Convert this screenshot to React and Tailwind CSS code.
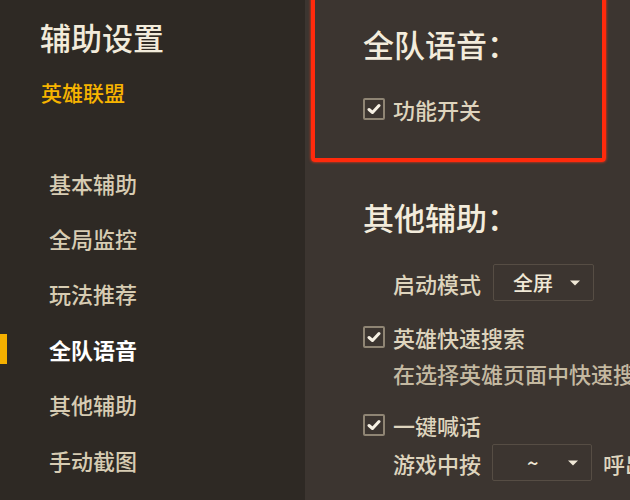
import React from "react";

const navItems = ["基本辅助", "全局监控", "玩法推荐", "全队语音", "其他辅助", "手动截图"];

const Checkbox = () => (
  <span className="flex h-[22px] w-[22px] shrink-0 items-center justify-center rounded-[2px] border-2 border-[#8f8574]">
    <svg width="14" height="12" viewBox="0 0 14 12">
      <path d="M2 6.5 L5.5 9.5 L12 2.5" fill="none" stroke="#f7f1e4" strokeWidth="3" strokeLinecap="round" strokeLinejoin="round" />
    </svg>
  </span>
);

const Select = ({ value, width, textPad }) => (
  <div className={`flex h-[37px] items-center justify-between rounded-[2px] border border-[#564d44] ${width}`}>
    <span className={`text-[20px] font-medium text-[#f0e8d6] ${textPad}`}>{value}</span>
    <svg width="12" height="8" viewBox="0 0 12 8" className="mr-[12px]">
      <path d="M1 1.5 H11 L6 6.5 Z" fill="#f0e8d6" />
    </svg>
  </div>
);

const CheckRow = ({ label }) => (
  <div className="flex h-[30px] items-center gap-[8px]">
    <Checkbox />
    <span className="text-[22px] font-medium leading-none text-[#ded4bd]">{label}</span>
  </div>
);

export default function App() {
  return (
    <main
      className="flex h-[500px] w-[630px] overflow-hidden whitespace-nowrap bg-[#3c3530]"
      style={{ fontFamily: '"Noto Sans CJK SC", "Noto Sans", sans-serif' }}
    >
      <aside className="flex w-[305px] shrink-0 flex-col bg-[#2e2924] pt-[19px]">
        <h1 className="pl-[40px] text-[31px] font-medium leading-[36px] text-[#f2ebdb]">辅助设置</h1>
        <div className="mt-[22px] pl-[41px] text-[21px] font-medium leading-[30px] text-[#f7b400]">英雄联盟</div>
        <nav className="mt-[48px] flex flex-col">
          {navItems.map((item) => {
            const active = item === "全队语音";
            return (
              <div key={item} className="flex h-[55.4px] items-center">
                <span className={`h-[30px] w-[7px] ${active ? "bg-[#f5b000]" : ""}`}></span>
                <span
                  className={`pl-[42px] text-[22px] leading-none ${
                    active ? "font-bold text-white" : "font-medium text-[#d7ccb3]"
                  }`}
                >
                  {item}
                </span>
              </div>
            );
          })}
        </nav>
      </aside>

      <section className="flex flex-1 flex-col">
        <div className="ml-[6px] mt-[-10px] w-[295px] rounded-[4px] border-4 border-[#ff2a0c] pb-[34px] pl-[48px] pt-[32px] shadow-[0_0_3px_#ff3a1a]">
          <h2 className="text-[31px] font-medium leading-[36px] text-[#f3ecdc]">全队语音：</h2>
          <div className="mt-[32px]">
            <CheckRow label="功能开关" />
          </div>
        </div>

        <div className="flex flex-col pl-[58px]">
          <h2 className="mt-[37px] text-[31px] font-medium leading-[36px] text-[#f3ecdc]">其他辅助：</h2>

          <div className="ml-[30px] mt-[29px] flex items-center gap-[12px]">
            <span className="text-[22px] font-medium leading-none text-[#ded4bd]">启动模式</span>
            <Select value="全屏" width="w-[101px]" textPad="pl-[19px]" />
          </div>

          <div className="mt-[21px]">
            <CheckRow label="英雄快速搜索" />
          </div>
          <div className="ml-[30px] mt-[6px] flex h-[30px] items-center text-[22px] font-medium leading-none text-[#c4b9a1]">
            在选择英雄页面中快速搜索英雄
          </div>

          <div className="mt-[22px]">
            <CheckRow label="一键喊话" />
          </div>
          <div className="ml-[30px] mt-[4px] flex items-center gap-[11px]">
            <span className="text-[22px] font-medium leading-none text-[#ded4bd]">游戏中按</span>
            <Select value="~" width="w-[100px]" textPad="pl-[34px]" />
            <span className="text-[22px] font-medium leading-none text-[#ded4bd]">呼出喊话</span>
          </div>
        </div>
      </section>
    </main>
  );
}
